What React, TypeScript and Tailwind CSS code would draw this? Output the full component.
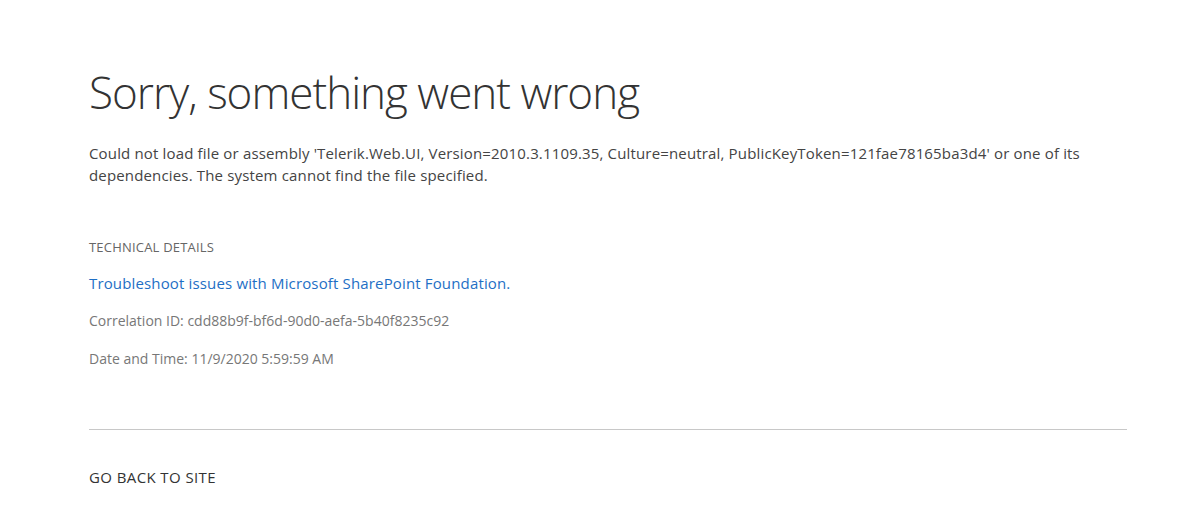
export default function App() {
  return (
    <div className="min-h-[523px] w-full bg-white" style={{ fontFamily: '"Open Sans", "Noto Sans", sans-serif' }}>
      <div className="pl-[89px] pr-[54px] pt-[62px]">
        <h1 className="text-[44px] leading-[60px] font-light text-[#333333] tracking-[-1px]">Sorry, something went wrong</h1>
        <div className="mt-[20px] text-[15px] leading-[22px] text-[#444444] tracking-[0.16px]">
          Could not load file or assembly 'Telerik.Web.UI, Version=2010.3.1109.35, Culture=neutral, PublicKeyToken=121fae78165ba3d4' or one of its dependencies. The system cannot find the file specified.
        </div>
        <div className="mt-[51px] text-[13px] leading-[20px] text-[#666666] tracking-[0.2px]">TECHNICAL DETAILS</div>
        <div className="mt-[16px] text-[15px] leading-[20px] text-[#1e6fc5] tracking-[0.15px]">Troubleshoot issues with Microsoft SharePoint Foundation.</div>
        <div className="mt-[18px] text-[14px] leading-[20px] text-[#777777]">Correlation ID: cdd88b9f-bf6d-90d0-aefa-5b40f8235c92</div>
        <div className="mt-[18px] text-[14px] leading-[20px] text-[#777777]">Date and Time: 11/9/2020 5:59:59 AM</div>
        <div className="mt-[60px] h-px bg-[#c8c8c8]" />
        <div className="mt-[37px] text-[15px] leading-[20px] text-[#333333] tracking-[0.4px]">GO BACK TO SITE</div>
      </div>
    </div>
  );
}
